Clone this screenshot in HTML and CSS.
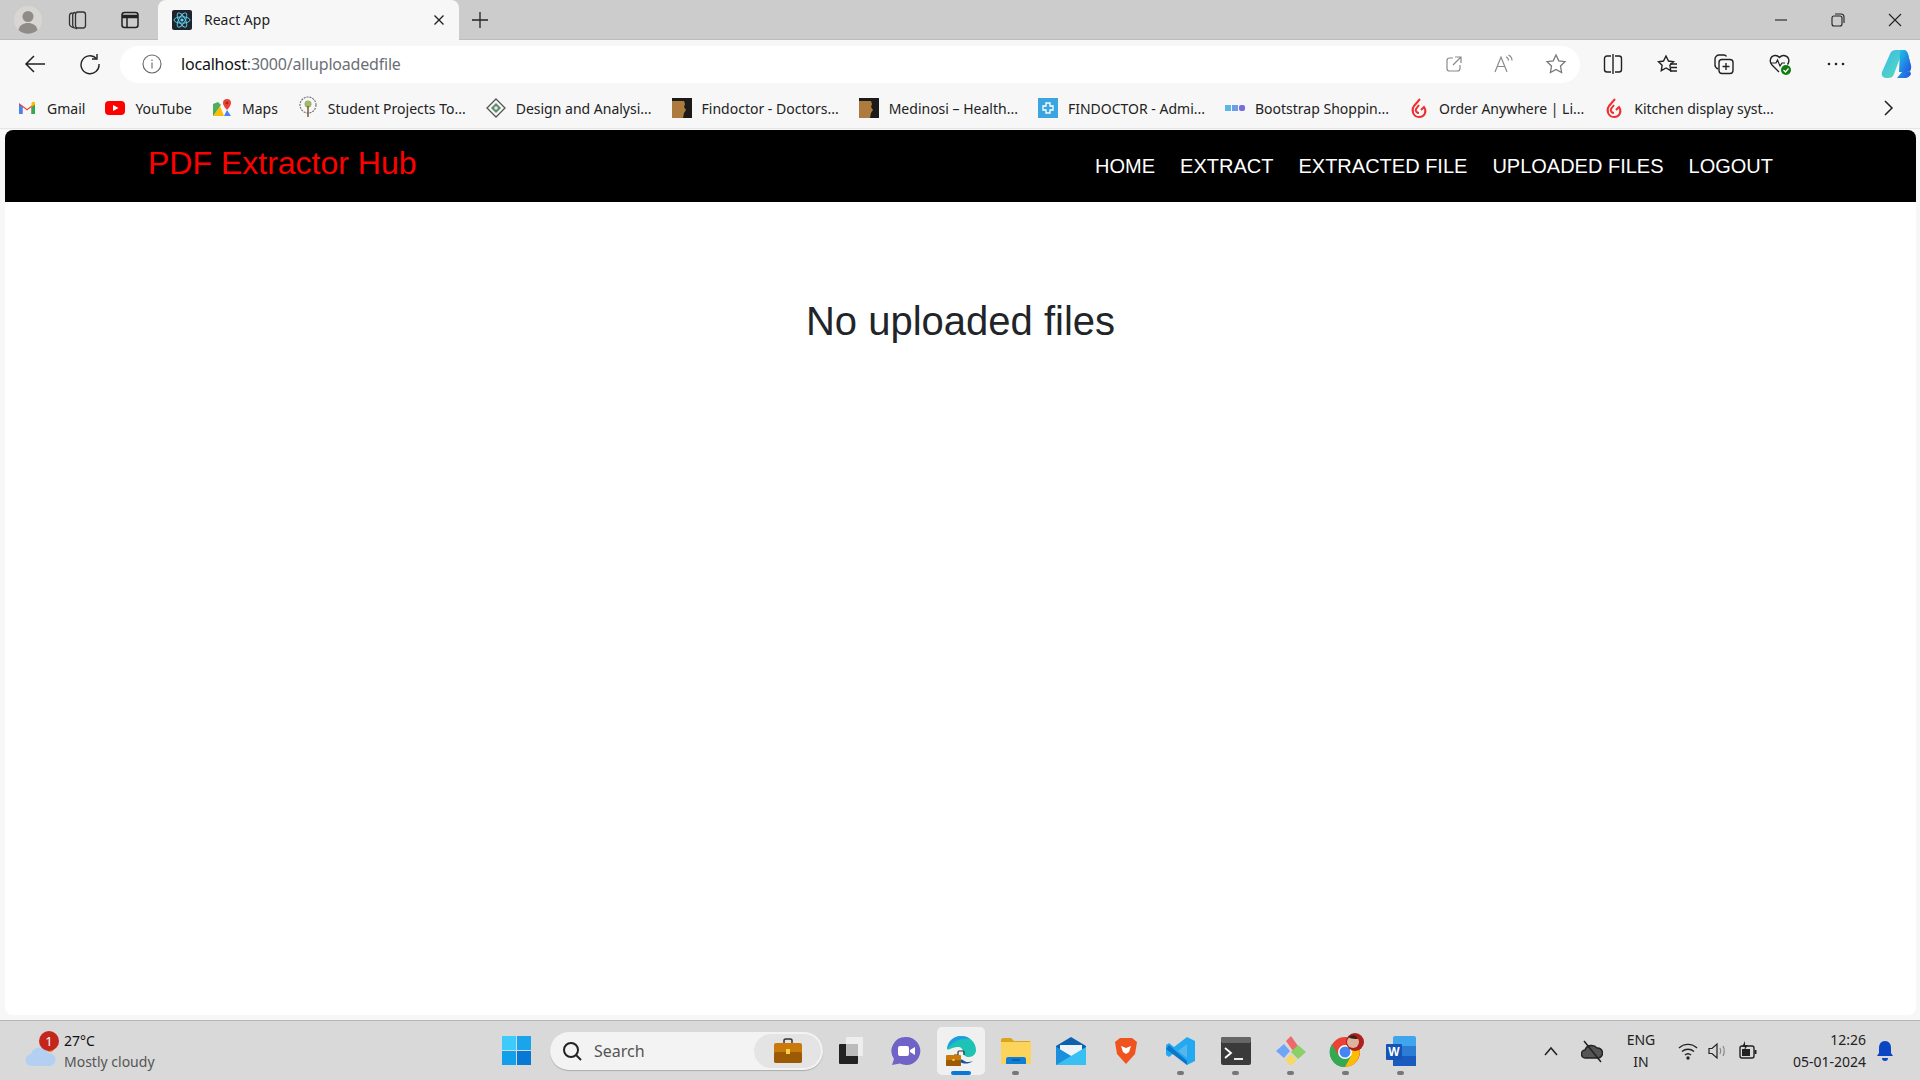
FILE: index.html
```html
<!DOCTYPE html>
<html lang="en">
<head>
  <meta charset="UTF-8" />
  <title>React App</title>
  <link rel="stylesheet" href="styles.css">
</head>
<body>
  <!-- browser tab strip -->
  <div class="tabstrip">
    <div class="profile">
      <svg width="28" height="28" viewBox="0 0 28 28"><circle cx="14" cy="14" r="14" fill="#d8d6d2"/><circle cx="14" cy="10.5" r="5.5" fill="#8f8c88"/><path d="M4.5 24c1-5 5-7 9.500-7s8.500 2 9.500 7a14 14 0 0 1-19 0z" fill="#8f8c88"/></svg>
    </div>
    <div class="strip-btn">
      <svg width="22" height="22" viewBox="0 0 22 22" fill="none" stroke="#333" stroke-width="1.300"><path d="M8 19l-3-1.500c-1-.5-1.500-1.200-1.500-2.200V7c0-2 1-3 3-3"/><path d="M11 20l-3-1.500c-.8-.5-1.300-1.200-1.300-2.200V6c0-1.500 1-2.500 2.500-2.500"/><rect x="9.500" y="3" width="10" height="16" rx="2.500"/></svg>
    </div>
    <div class="strip-btn">
      <svg width="20" height="20" viewBox="0 0 20 20" fill="none" stroke="#222" stroke-width="1.500"><rect x="2" y="2.500" width="16" height="15" rx="2.500"/><path d="M2 6.500h16" stroke-width="3.500"/><path d="M7 6.500v11"/></svg>
    </div>
    <div class="tab">
      <svg class="favicon" width="20" height="20" viewBox="0 0 20 20"><rect width="20" height="20" rx="2" fill="#20232a"/><g fill="none" stroke="#61dafb" stroke-width=".9"><ellipse cx="10" cy="10" rx="8" ry="3.200"/><ellipse cx="10" cy="10" rx="8" ry="3.200" transform="rotate(60 10 10)"/><ellipse cx="10" cy="10" rx="8" ry="3.200" transform="rotate(120 10 10)"/></g><circle cx="10" cy="10" r="1.600" fill="#61dafb"/></svg>
      <span class="tab-title">React App</span>
      <svg class="tab-close" width="12" height="12" viewBox="0 0 12 12" stroke="#222" stroke-width="1.400"><path d="M1.500 1.500l9 9M10.500 1.500l-9 9"/></svg>
    </div>
    <div class="new-tab">
      <svg width="18" height="18" viewBox="0 0 18 18" stroke="#222" stroke-width="1.300"><path d="M9 1v16M1 9h16"/></svg>
    </div>
    <div class="window-btns">
      <svg width="14" height="14" viewBox="0 0 14 14" stroke="#222" stroke-width="1.100"><path d="M1 7h12"/></svg>
      <svg width="14" height="14" viewBox="0 0 14 14" fill="none" stroke="#222" stroke-width="1.100"><rect x="1" y="3" width="10" height="10" rx="2"/><path d="M4 1h6c2 0 3 1 3 3v6"/></svg>
      <svg width="14" height="14" viewBox="0 0 14 14" stroke="#222" stroke-width="1.100"><path d="M1 1l12 12M13 1L1 13"/></svg>
    </div>
  </div>

  <!-- address bar row -->
  <div class="toolbar">
    <div class="tool-btn">
      <svg width="22" height="22" viewBox="0 0 22 22" fill="none" stroke="#222" stroke-width="1.500"><path d="M21 11H2M10 3l-8 8 8 8"/></svg>
    </div>
    <div class="tool-btn">
      <svg width="22" height="22" viewBox="0 0 22 22" fill="none" stroke="#222" stroke-width="1.400"><path d="M17.500 5.500A9 9 0 1 0 20 11"/><path d="M18 1v5h-5"/></svg>
    </div>
    <div class="address">
      <svg class="info" width="20" height="20" viewBox="0 0 20 20" fill="none" stroke="#666" stroke-width="1.100"><circle cx="10" cy="10" r="9"/><path d="M10 8.500v6"/><path d="M10 5.500v1.500"/></svg>
      <span class="url"><b>localhost</b>:3000/alluploadedfile</span>
      <div class="address-icons">
        <svg width="18" height="18" viewBox="0 0 18 18" fill="none" stroke="#8a8a8a" stroke-width="1.200"><path d="M8 3H4.500C3 3 2 4 2 5.500v8C2 15 3 16 4.500 16h8c1.500 0 2.500-1 2.500-2.500V10"/><path d="M10 2h6v6M16 2L8 10"/></svg>
        <svg width="22" height="20" viewBox="0 0 22 20" fill="none" stroke="#8a8a8a" stroke-width="1.200"><path d="M2 18L8 3l6 15M4.500 12.500h7"/><path d="M13 3c1.500.5 2.500 2 2.500 3.500M15.500 1c2 1 3.500 3 3.500 5.500"/></svg>
        <svg width="22" height="22" viewBox="0 0 22 22" fill="none" stroke="#777" stroke-width="1.300"><path d="M11 2l2.800 5.800 6.200.9-4.500 4.400 1.100 6.400L11 16.500l-5.600 3 1.100-6.400L2 8.700l6.200-.9z"/></svg>
      </div>
    </div>
    <div class="tool-group">
      <svg width="20" height="22" viewBox="0 0 20 22" fill="none" stroke="#222" stroke-width="1.400"><path d="M8 3H4C2.500 3 1.500 4 1.500 5.500v11C1.500 18 2.500 19 4 19h4M12 3h4c1.500 0 2.500 1 2.500 2.500v11c0 1.500-1 2.500-2.500 2.500h-4M10 1v20"/></svg>
      <svg width="22" height="22" viewBox="0 0 22 22" fill="none" stroke="#222" stroke-width="1.400"><path d="M10 2l2.500 5 5 .8-3.600 3.500.8 5.300L10 14l-4.700 2.600.8-5.300L2.500 7.800l5-.8z" transform="translate(-1 1)"/><path d="M13 11h7M14 14.500h6M13 18h7"/></svg>
      <svg width="22" height="22" viewBox="0 0 22 22" fill="none" stroke="#222" stroke-width="1.400"><path d="M5 16c-2-1-3-2-3-4V6c0-2 2-4 4-4h5c1 0 2 .5 2.500 1.500"/><rect x="6" y="6.500" width="14" height="14" rx="3"/><path d="M13 10v7M9.500 13.500h7"/></svg>
      <svg width="24" height="24" viewBox="0 0 24 24"><path d="M11 20L4 13c-3-3-2-9 3-9.500 2-.2 3.500.8 4.500 2 1-1.200 2.500-2.200 4.500-2 5 .5 6 5.500 3.500 9" fill="none" stroke="#222" stroke-width="1.400"/><path d="M2.500 11H8l1.500-3 2.500 6 2-3h3" fill="none" stroke="#222" stroke-width="1.200"/><circle cx="18" cy="18" r="5" fill="#107c10"/><path d="M15.500 18l2 2 3-3.500" fill="none" stroke="#fff" stroke-width="1.200"/></svg>
      <svg width="20" height="20" viewBox="0 0 20 20" fill="#222"><circle cx="3" cy="10" r="1.300"/><circle cx="10" cy="10" r="1.300"/><circle cx="17" cy="10" r="1.300"/></svg>
      <svg class="copilot" width="32" height="32" viewBox="0 0 32 32"><defs><linearGradient id="copA" x1="0" y1="0" x2="1" y2="1"><stop offset="0" stop-color="#38b6f0"/><stop offset="1" stop-color="#5be0b3"/></linearGradient><linearGradient id="copB" x1="0" y1="0" x2="1" y2="1"><stop offset="0" stop-color="#1fc5e8"/><stop offset="1" stop-color="#2155e0"/></linearGradient></defs><path d="M9 6c1-3 3-4 6-4h7L13 26c-1 3-3 4-6 4H5c-3 0-5-3-4-6z" fill="url(#copA)" transform="translate(1 0)"/><path d="M23 2c3 0 4 2 5 4l3 12c.7 3-1 6-4 6h-5l-5 6h8c3 0 5-2 6-4" fill="url(#copB)"/><path d="M20 2h4c2 0 3 1.500 4 4l3 12c.5 3-1 6-4 6h-8z" fill="url(#copB)"/></svg>
    </div>
  </div>

  <!-- favourites row -->
  <div class="bookmarks">
    <div class="mark">
      <svg width="20" height="20" viewBox="0 0 20 20"><path d="M2 16V5l8 6 8-6v11h-3.500V9L10 12.500 5.500 9v7z" fill="#ea4335"/><path d="M2 16h3.500V9L2 6.500z" fill="#4285f4"/><path d="M14.500 16H18V6.500L14.500 9z" fill="#34a853"/><path d="M14.500 9L18 6.500V5c0-1-1.500-1.500-2.500-1L14.500 5z" fill="#fbbc04"/></svg>
      <span>Gmail</span>
    </div>
    <div class="mark">
      <svg width="20" height="20" viewBox="0 0 20 20"><rect y="3" width="20" height="14" rx="4" fill="#f00"/><path d="M8 7l5.500 3L8 13z" fill="#fff"/></svg>
      <span>YouTube</span>
    </div>
    <div class="mark">
      <svg width="20" height="20" viewBox="0 0 20 20"><path d="M1 18L8 8l4 10z" fill="#fbbc04"/><path d="M1 18V6l7 2z" fill="#34a853"/><path d="M12 18l3-6 4 6z" fill="#4285f4"/><path d="M1 6l5-2 3 3-8 8z" fill="#4fae5d"/><path d="M15 1a4 4 0 0 1 4 4c0 3-4 7-4 7s-4-4-4-7a4 4 0 0 1 4-4z" fill="#ea4335"/><circle cx="15" cy="5" r="1.400" fill="#a52714"/></svg>
      <span>Maps</span>
    </div>
    <div class="mark">
      <svg width="20" height="24" viewBox="0 0 20 24"><circle cx="10" cy="9" r="8" fill="none" stroke="#777" stroke-width="1.200" stroke-dasharray="2 1"/><circle cx="10" cy="8" r="3.500" fill="#8dbb6a"/><circle cx="10" cy="8" r="1.500" fill="#e0a35c"/><path d="M10 10v11" stroke="#7a5a3a" stroke-width="1.500"/></svg>
      <span>Student Projects To...</span>
    </div>
    <div class="mark">
      <svg width="20" height="20" viewBox="0 0 20 20"><path d="M10 1l9 9-9 9-9-9z" fill="none" stroke="#555" stroke-width="1.300"/><path d="M10 5l5 5-5 5-5-5z" fill="#5d8a6c"/><circle cx="10" cy="10" r="1.800" fill="#e6e6e6"/></svg>
      <span>Design and Analysi...</span>
    </div>
    <div class="mark">
      <svg width="20" height="20" viewBox="0 0 20 20"><rect width="20" height="20" fill="#1c1b1a"/><path d="M0 3h12l1 3-1 3 2 3-2 3-1 5H0z" fill="#ad7b3d"/></svg>
      <span>Findoctor - Doctors...</span>
    </div>
    <div class="mark">
      <svg width="20" height="20" viewBox="0 0 20 20"><rect width="20" height="20" fill="#1c1b1a"/><path d="M0 3h12l1 3-1 3 2 3-2 3-1 5H0z" fill="#ad7b3d"/></svg>
      <span>Medinosi – Health...</span>
    </div>
    <div class="mark">
      <svg width="20" height="20" viewBox="0 0 20 20"><rect width="20" height="20" fill="#3aa5e0"/><path d="M8 5h4v3h3v4h-3v3H8v-3H5V8h3z" fill="none" stroke="#fff" stroke-width="1.300"/></svg>
      <span>FINDOCTOR - Admi...</span>
    </div>
    <div class="mark">
      <svg width="20" height="20" viewBox="0 0 20 20"><rect y="7" width="6" height="6" fill="#5bb6ea"/><rect x="7" y="7" width="6" height="6" fill="#6d9fe6"/><rect x="14" y="7" width="6" height="6" rx="2" fill="#7b6be0"/></svg>
      <span>Bootstrap Shoppin...</span>
    </div>
    <div class="mark">
      <svg width="20" height="22" viewBox="0 0 20 22" fill="none" stroke="#ee2f2f" stroke-width="2"><path d="M11 2L5 9c-3 4-1 11 5 11s8-6 5-10l-3 3"/><path d="M10 8l-3 4c-1 2 1 4 3 4"/></svg>
      <span>Order Anywhere | Li...</span>
    </div>
    <div class="mark">
      <svg width="20" height="22" viewBox="0 0 20 22" fill="none" stroke="#ee2f2f" stroke-width="2"><path d="M11 2L5 9c-3 4-1 11 5 11s8-6 5-10l-3 3"/><path d="M10 8l-3 4c-1 2 1 4 3 4"/></svg>
      <span>Kitchen display syst...</span>
    </div>
    <svg class="more-marks" width="12" height="16" viewBox="0 0 12 16" fill="none" stroke="#222" stroke-width="1.500"><path d="M3 1l7 7-7 7"/></svg>
  </div>

  <!-- the react app itself -->
  <div class="page">
    <nav class="navbar">
      <a class="brand">PDF Extractor Hub</a>
      <ul class="nav-links">
        <li>HOME</li>
        <li>EXTRACT</li>
        <li>EXTRACTED FILE</li>
        <li>UPLOADED FILES</li>
        <li>LOGOUT</li>
      </ul>
    </nav>
    <h1 class="empty-msg">No uploaded files</h1>
  </div>

  <!-- windows taskbar -->
  <div class="taskbar">
    <div class="weather">
      <div class="weather-icon">
        <svg width="32" height="24" viewBox="0 0 32 24"><circle cx="25" cy="5" r="4" fill="#f08a1d"/><path d="M7 23a6 6 0 0 1-1-12 9 9 0 0 1 17-1 6.500 6.500 0 0 1 2 13z" fill="#b3d0f2"/></svg>
        <span class="badge">1</span>
      </div>
      <div class="weather-text">
        <span class="temp">27°C</span>
        <span class="cond">Mostly cloudy</span>
      </div>
    </div>
    <div class="task-center">
      <div class="task-item">
        <svg width="29" height="29" viewBox="0 0 29 29"><rect width="14" height="14" fill="#3ccbfb"/><rect x="15" width="14" height="14" fill="#1aa4ec"/><rect y="15" width="14" height="14" fill="#12a0ea"/><rect x="15" y="15" width="14" height="14" fill="#0778d6"/></svg>
      </div>
      <div class="search">
        <svg width="22" height="22" viewBox="0 0 22 22" fill="none" stroke="#222" stroke-width="2"><circle cx="10" cy="10" r="7"/><path d="M15 15l5 5"/></svg>
        <span>Search</span>
        <div class="search-pill">
          <svg width="28" height="25" viewBox="0 0 28 25"><path d="M10 5V2.500C10 1.500 11 1 12 1h4c1 0 2 .5 2 1.500V5" fill="none" stroke="#333" stroke-width="1.500"/><rect y="5" width="28" height="20" rx="2" fill="#c97a0a"/><rect y="14" width="28" height="11" rx="2" fill="#9c5a05"/><rect x="12" y="11" width="4" height="5" fill="#ffd43b"/></svg>
        </div>
      </div>
      <div class="task-item">
        <svg width="24" height="29" viewBox="0 0 24 29"><rect x="0" y="8" width="19" height="20" rx="1" fill="#222"/><rect x="7" y="1" width="17" height="19" rx="1" fill="#f0f0f0" opacity=".9"/><rect x="7" y="8" width="12" height="12" fill="#bbb"/></svg>
      </div>
      <div class="task-item">
        <svg width="30" height="30" viewBox="0 0 30 30"><path d="M15 1a14 14 0 1 1-6 26.500L1 29l2-6A14 14 0 0 1 15 1z" fill="#6f63c8"/><rect x="7" y="10" width="11" height="10" rx="2" fill="#fff"/><path d="M19 14l5-3v8l-5-3z" fill="#fff"/></svg>
      </div>
      <div class="task-item active">
        <svg width="32" height="32" viewBox="0 0 32 32"><path d="M2 14C3 6 9 1 16 1c8 0 15 6 15 14 0 4-3 7-7 7-3 0-6-2-6-5 0-3-2-5-5-5-6 0-10 4-11 2z" fill="#1ec3b5"/><path d="M2 14C3 6 9 1 16 1c4 0 7 1 9 3-8-1-16 1-23 10z" fill="#1f9de0"/><path d="M10 22c3 6 11 9 18 4-3 1-7 2-10-1z" fill="#0c59a4"/><path d="M9 20h4v-3c0-1 1-1 1-1h4s1 0 1 1v3" fill="none" stroke="#333" stroke-width="1.200"/><rect x="1" y="20" width="15" height="11" rx="1" fill="#c97a0a"/><rect x="1" y="25" width="15" height="6" rx="1" fill="#9c5a05"/><rect x="7.500" y="24" width="2" height="2" fill="#ffd43b"/></svg>
        <span class="task-dot blue"></span>
      </div>
      <div class="task-item">
        <svg width="30" height="27" viewBox="0 0 30 27"><path d="M0 3c0-1 1-2 2-2h8l3 3h15c1 0 2 1 2 2v3H0z" fill="#dca31d"/><rect y="5" width="30" height="22" fill="#fcd45c"/><path d="M5 27v-5c0-1 1-2 2-2h16c1 0 2 1 2 2v5z" fill="#0f7fd6"/><path d="M11 23h8" stroke="#07497e" stroke-width="1"/></svg>
        <span class="task-dot"></span>
      </div>
      <div class="task-item">
        <svg width="30" height="28" viewBox="0 0 30 28"><path d="M15 0L0 9v19h30V9z" fill="#0c62ae"/><path d="M4 8h22v8l-11 6-11-6z" fill="#eef3f7"/><path d="M0 10l15 9 15-9v18H0z" fill="#38c0f2"/><path d="M0 28V10l15 9z" fill="#1b8fdc"/></svg>
      </div>
      <div class="task-item">
        <svg width="24" height="28" viewBox="0 0 24 28"><path d="M6 1h12l5 4-2 12-9 10-9-10L1 5z" fill="#f0541e"/><path d="M7 9l5 2 5-2-2 6-3 2-3-2z" fill="#fff"/></svg>
      </div>
      <div class="task-item">
        <svg width="30" height="30" viewBox="0 0 30 30"><path d="M21 1l8 4v20l-8 4-13-12-5 4-3-2v-10l3-2 5 4z" fill="#23a8f2"/><path d="M21 8v14l-9-7z" fill="#d8d8d8" opacity=".3"/><path d="M3 9l18 16v4L0 13z" fill="#0a78c8"/></svg>
        <span class="task-dot"></span>
      </div>
      <div class="task-item">
        <svg width="30" height="28" viewBox="0 0 30 28"><rect y="0" width="30" height="28" rx="2" fill="#3a3a3a"/><rect width="30" height="6" rx="2" fill="#666"/><path d="M4 11l6 5-6 5" fill="none" stroke="#fff" stroke-width="1.800"/><path d="M13 22h9" stroke="#fff" stroke-width="1.800"/></svg>
        <span class="task-dot"></span>
      </div>
      <div class="task-item">
        <svg width="30" height="30" viewBox="0 0 30 30"><path d="M15 0l7 10-5 5-7-10z" fill="#ee6a6a"/><path d="M8 8l6 7-6 7-8-7z" fill="#6ea6f5"/><path d="M22 9l8 7-8 7-7-7z" fill="#8bd067"/><path d="M15 18l6 6-6 6-6-6z" fill="#f5d867"/></svg>
        <span class="task-dot"></span>
      </div>
      <div class="task-item">
        <svg width="36" height="36" viewBox="0 0 36 36"><circle cx="17" cy="19" r="15" fill="#ea4335"/><path d="M17 34a15 15 0 0 0 13-22H17z" fill="#fbbc04"/><path d="M4 11a15 15 0 0 0 13 23l6-11H11z" fill="#34a853"/><circle cx="17" cy="19" r="7" fill="#fff"/><circle cx="17" cy="19" r="5.500" fill="#4285f4"/><circle cx="27" cy="9" r="9" fill="#b01e1e"/><circle cx="25" cy="9" r="6" fill="#dcb49b"/><path d="M20 4c4-3 9-2 10 2-3 0-7 0-10-2z" fill="#3a2418"/></svg>
        <span class="task-dot"></span>
      </div>
      <div class="task-item">
        <svg width="30" height="30" viewBox="0 0 30 30"><rect x="7" y="0" width="23" height="30" rx="2" fill="#41a5ee"/><rect x="7" y="10" width="23" height="10" fill="#2b7cd3"/><rect x="7" y="20" width="23" height="10" fill="#185abd"/><rect x="0" y="8" width="16" height="16" rx="1" fill="#1553b6"/><text x="8" y="20" class="word-w">W</text></svg>
        <span class="task-dot"></span>
      </div>
    </div>
    <div class="tray">
      <svg width="14" height="10" viewBox="0 0 14 10" fill="none" stroke="#222" stroke-width="1.500"><path d="M1 9l6-7 6 7"/></svg>
      <svg class="tray-cloud" width="22" height="24" viewBox="0 0 22 24" fill="none" stroke="#222" stroke-width="1.500"><path d="M5 19a4 4 0 0 1-1-8 7 7 0 0 1 12-2 5 5 0 0 1 1 10z" fill="#555"/><path d="M3 2l17 21"/></svg>
      <div class="lang"><span>ENG</span><span>IN</span></div>
      <div class="tray-icons">
        <svg width="20" height="20" viewBox="0 0 20 20" fill="none" stroke="#222" stroke-width="1.400"><path d="M1 7a13 13 0 0 1 18 0M4 10.500a9 9 0 0 1 12 0M7 14a4.500 4.500 0 0 1 6 0"/><circle cx="10" cy="17" r="1" fill="#222"/></svg>
        <svg width="20" height="20" viewBox="0 0 20 20" fill="none" stroke="#222" stroke-width="1.200"><path d="M1 7.500v5h3l5 4.500V3L4 7.500z"/><path d="M12 7c1 2 1 4 0 6M15 5c1.500 3 1.500 7 0 10" stroke="#888"/></svg>
        <svg width="20" height="20" viewBox="0 0 20 20"><rect x="2" y="5" width="14" height="12" rx="2" fill="none" stroke="#222" stroke-width="1.400"/><rect x="4" y="8" width="8" height="7" fill="#222"/><rect x="16.500" y="9" width="2" height="4" fill="#222"/><path d="M7 0L4 6h3l-1 4 4-6H7z" fill="#222"/></svg>
      </div>
      <div class="clock"><span>12:26</span><span>05-01-2024</span></div>
      <svg width="18" height="22" viewBox="0 0 18 22"><path d="M9 1c4 0 6 3 6 7v5l2 3H1l2-3V8c0-4 2-7 6-7z" fill="#0a46c4"/><path d="M6 18h6c0 2-1 3-3 3s-3-1-3-3z" fill="#0a46c4"/></svg>
    </div>
  </div>
</body>
</html>
```

FILE: styles.css
```css
* {
  box-sizing: border-box;
}

body {
  margin: 0;
  width: 1920px;
  height: 1080px;
  overflow: hidden;
  display: flex;
  flex-direction: column;
  background: #f7f7f7;
  font-family: "Noto Sans", sans-serif;
  color: #222;
}

/* tab strip */
.tabstrip {
  height: 40px;
  flex: none;
  display: flex;
  align-items: center;
  background: #cccccc;
  border-bottom: 1px solid #bdbdbd;
}

.profile {
  width: 28px;
  height: 28px;
  margin-left: 14px;
  display: flex;
}

.strip-btn {
  width: 53px;
  display: flex;
  justify-content: center;
}

.strip-btn:nth-child(2) {
  margin-left: 8px;
}

.tab {
  width: 301px;
  height: 40px;
  margin-left: 2px;
  padding: 0 14px;
  display: flex;
  align-items: center;
  gap: 12px;
  background: #f7f7f7;
  border-radius: 8px 8px 0 0;
}

.tab-title {
  flex: 1;
  font-size: 14px;
  color: #222;
}

.new-tab {
  width: 42px;
  margin-left: 0;
  display: flex;
  justify-content: center;
}

.window-btns {
  margin-left: auto;
  margin-right: 18px;
  display: flex;
  gap: 43px;
}

/* toolbar */
.toolbar {
  height: 48px;
  flex: none;
  display: flex;
  align-items: center;
}

.tool-btn {
  width: 55px;
  display: flex;
  justify-content: center;
}

.tool-btn:first-child {
  margin-left: 7px;
}

.address {
  width: 1460px;
  height: 37px;
  margin-left: 3px;
  padding: 0 13px 0 22px;
  display: flex;
  align-items: center;
  background: #fff;
  border-radius: 19px;
}

.url {
  margin-left: 19px;
  font-size: 16px;
  color: #6b6f76;
  letter-spacing: -0.2px;
}

.url b {
  font-weight: 400;
  color: #111;
}

.address-icons {
  margin-left: auto;
  display: flex;
  align-items: center;
  gap: 30px;
}

.tool-group {
  flex: 1;
  margin-left: 23px;
  padding-right: 8px;
  display: flex;
  align-items: center;
  justify-content: space-between;
}

/* favourites */
.bookmarks {
  height: 41px;
  flex: none;
  padding-left: 17px;
  display: flex;
  align-items: center;
  gap: 20px;
  font-size: 14px;
  color: #222;
  border-bottom: 1px solid #e6e6e6;
}

.mark {
  display: flex;
  align-items: center;
  gap: 10px;
  white-space: nowrap;
}

.more-marks {
  margin-left: auto;
  margin-right: 26px;
}

/* app page */
.page {
  flex: 1;
  margin: 1px 4px 5px 5px;
  display: flex;
  flex-direction: column;
  background: #fff;
  border-radius: 8px;
  overflow: hidden;
  font-family: "Liberation Sans", Arial, sans-serif;
}

.navbar {
  height: 72px;
  flex: none;
  padding: 0 143px;
  display: flex;
  align-items: center;
  justify-content: space-between;
  background: #000;
}

.brand {
  font-size: 32px;
  color: #f00;
  margin-bottom: 6px;
}

.nav-links {
  list-style: none;
  margin: 0;
  padding: 0;
  display: flex;
  gap: 25px;
  font-size: 20px;
  color: #fff;
}

.empty-msg {
  margin: 95px 0 0;
  text-align: center;
  font-size: 40px;
  font-weight: 400;
  line-height: 48px;
  color: #212529;
}

/* taskbar */
.taskbar {
  height: 60px;
  flex: none;
  position: relative;
  display: flex;
  align-items: center;
  background: #d9d9d9;
  border-top: 1px solid #b5b5b5;
}

.weather {
  width: 502px;
  padding-left: 25px;
  display: flex;
  align-items: center;
  gap: 9px;
}

.weather-icon {
  position: relative;
  width: 30px;
  height: 30px;
  padding-top: 7px;
}

.badge {
  position: absolute;
  top: -5px;
  left: 14px;
  width: 20px;
  height: 20px;
  border-radius: 50%;
  background: #c4261d;
  color: #fff;
  font-size: 13px;
  line-height: 20px;
  text-align: center;
}

.weather-text {
  display: flex;
  flex-direction: column;
  font-size: 14px;
  line-height: 21px;
}

.temp {
  color: #111;
}

.cond {
  color: #555;
}

.task-center {
  display: flex;
  align-items: center;
}

.task-item {
  position: relative;
  width: 55px;
  height: 48px;
  display: flex;
  align-items: center;
  justify-content: center;
}

.task-item:first-child {
  width: 29px;
  margin-right: 19px;
}

.task-item.active {
  width: 48px;
  margin: 0 3.500px;
  background: #f0f0f0;
  border-radius: 5px;
}

.task-dot {
  position: absolute;
  bottom: 0;
  left: 50%;
  width: 7px;
  height: 4px;
  margin-left: -3.500px;
  border-radius: 2px;
  background: #777;
}

.task-dot.blue {
  width: 20px;
  margin-left: -10px;
  background: #0a78d6;
}

.search {
  width: 273px;
  height: 38px;
  margin-right: 0;
  padding: 0 2px 0 11px;
  display: flex;
  align-items: center;
  gap: 11px;
  background: #f3f3f3;
  border-radius: 19px;
  box-shadow: 0 1px 1px rgba(0,0,0,0.2);
  font-size: 16px;
  color: #555;
}

.search-pill {
  width: 67px;
  height: 34px;
  margin-left: auto;
  display: flex;
  align-items: center;
  justify-content: center;
  background: #e4e4e4;
  border-radius: 17px;
}

.word-w {
  font-family: "Liberation Sans", sans-serif;
  font-size: 12px;
  font-weight: 700;
  fill: #fff;
  text-anchor: middle;
}

.tray {
  flex: 1;
  padding-right: 26px;
  display: flex;
  align-items: center;
}

.tray > svg:first-child {
  margin-left: auto;
}

.tray-cloud {
  margin-left: 23px;
}

.lang {
  width: 40px;
  margin-left: 18px;
  display: flex;
  flex-direction: column;
  align-items: center;
  font-size: 14px;
  line-height: 22px;
}

.tray-icons {
  margin-left: 17px;
  display: flex;
  gap: 10px;
}

.clock {
  width: 100px;
  margin-left: 8px;
  display: flex;
  flex-direction: column;
  align-items: flex-end;
  font-size: 14px;
  line-height: 22px;
}

.clock + svg {
  margin-left: 10px;
}
```
